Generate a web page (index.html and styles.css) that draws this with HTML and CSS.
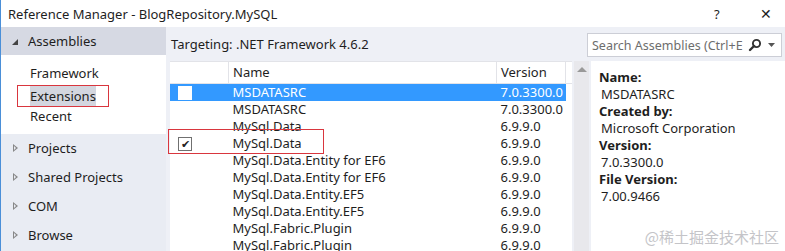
FILE: index.html
```html
<!DOCTYPE html>
<html>

<head>
    <title>Reference Manager - BlogRepository.MySQL</title>
    <link rel="stylesheet" href="styles.css">
</head>

<body>
    <div class="window">
        <div class="titlebar">
            <span class="title">Reference Manager - BlogRepository.MySQL</span>
            <span class="help">?</span>
            <span class="close">&#x2715;</span>
        </div>

        <div class="main">
            <!-- left tree -->
            <div class="sidebar">
                <div class="node open"><span class="arrow-open"></span>Assemblies</div>
                <div class="children">
                    <div class="child">Framework</div>
                    <div class="child"><span class="mark"><span class="picked">Extensions</span></span></div>
                    <div class="child">Recent</div>
                </div>
                <div class="node"><span class="arrow"></span>Projects</div>
                <div class="node"><span class="arrow"></span>Shared Projects</div>
                <div class="node"><span class="arrow"></span>COM</div>
                <div class="node"><span class="arrow"></span>Browse</div>
            </div>

            <div class="content">
                <div class="target-bar">
                    <span>Targeting: .NET Framework 4.6.2</span>
                    <div class="search">
                        <span class="placeholder">Search Assemblies (Ctrl+E</span>
                        <svg class="glass" width="14" height="14" viewBox="0 0 14 14">
                            <circle cx="8.5" cy="5.5" r="3.6" fill="none" stroke="#333" stroke-width="1.9" />
                            <line x1="6" y1="8" x2="2" y2="12" stroke="#333" stroke-width="2.4" stroke-linecap="round" />
                        </svg>
                        <svg class="drop" width="7" height="4" viewBox="0 0 7 4">
                            <polygon points="0,0 7,0 3.5,4" fill="#555" />
                        </svg>
                    </div>
                </div>

                <div class="body">
                    <div class="list">
                        <table class="grid">
                            <thead>
                                <tr>
                                    <th class="c-check"></th>
                                    <th class="c-name">Name</th>
                                    <th class="c-ver">Version</th>
                                    <th class="c-rest"></th>
                                </tr>
                            </thead>
                            <tbody id="rows"></tbody>
                        </table>
                        <div class="annot"></div>
                    </div>
                    <div class="scroll"><span class="up"></span></div>
                    <div class="details">
                        <div class="lbl">Name:</div>
                        <div class="val">MSDATASRC</div>
                        <div class="lbl">Created by:</div>
                        <div class="val">Microsoft Corporation</div>
                        <div class="lbl">Version:</div>
                        <div class="val">7.0.3300.0</div>
                        <div class="lbl">File Version:</div>
                        <div class="val">7.00.9466</div>
                    </div>
                </div>
            </div>
        </div>
        <div class="watermark">@稀土掘金技术社区</div>
    </div>

    <script>
        let assemblies = [
            ["MSDATASRC", "7.0.3300.0", "box", true],
            ["MSDATASRC", "7.0.3300.0", "", false],
            ["MySql.Data", "6.9.9.0", "", false],
            ["MySql.Data", "6.9.9.0", "checked", false],
            ["MySql.Data.Entity for EF6", "6.9.9.0", "", false],
            ["MySql.Data.Entity for EF6", "6.9.9.0", "", false],
            ["MySql.Data.Entity.EF5", "6.9.9.0", "", false],
            ["MySql.Data.Entity.EF5", "6.9.9.0", "", false],
            ["MySql.Fabric.Plugin", "6.9.9.0", "", false],
            ["MySql.Fabric.Plugin", "6.9.9.0", "", false]
        ];
        let html = '';
        for (let i = 0; i < assemblies.length; i++) {
            let a = assemblies[i];
            let check = '';
            if (a[2] == 'box') {
                check = '<span class="cb"></span>';
            } else if (a[2] == 'checked') {
                check = '<span class="cb on">&#x2714;</span>';
            }
            html += '<tr' + (a[3] ? ' class="sel"' : '') + '>';
            html += '<td class="c-check">' + check + '</td>';
            html += '<td class="c-name">' + a[0] + '</td>';
            html += '<td class="c-ver">' + a[1] + '</td>';
            html += '<td class="c-rest"></td>';
            html += '</tr>';
        }
        document.getElementById("rows").innerHTML = html;
    </script>
</body>

</html>
```

FILE: styles.css
```css
/* Page and window */
body {
    margin: 0;
    font-family: "Noto Sans", "Noto Sans CJK SC", sans-serif;
    font-size: 13px;
    color: #1e1e1e;
}

.window {
    position: relative;
    width: 785px;
    height: 251px;
    overflow: hidden;
    background: #fff;
    border-left: 1px solid #4a8fd8;
    box-sizing: border-box;
}

/* Title bar */
.titlebar {
    height: 27px;
    display: flex;
    align-items: center;
    padding-left: 7px;
    font-size: 13px;
}

.title {
    flex: 1;
}

.help {
    width: 46px;
    font-size: 13px;
}

.close {
    width: 25px;
    font-size: 14px;
}

.main {
    display: flex;
    height: 224px;
}

/* Left tree */
.sidebar {
    width: 165px;
    flex-shrink: 0;
    background: #e9ecf3;
}

.node {
    height: 29px;
    display: flex;
    align-items: center;
    padding-left: 11px;
}

.node.open {
    height: 28px;
    background: #d6d9e3;
}

.arrow-open {
    width: 0;
    height: 0;
    border-left: 6px solid transparent;
    border-bottom: 6px solid #444;
    margin-right: 10px;
    margin-top: 2px;
}

.arrow {
    width: 0;
    height: 0;
    border-top: 4px solid transparent;
    border-bottom: 4px solid transparent;
    border-left: 5px solid #888;
    margin-left: 1px;
    margin-right: 10px;
    position: relative;
}

.arrow::after {
    content: "";
    position: absolute;
    left: -4px;
    top: -2px;
    border-top: 2px solid transparent;
    border-bottom: 2px solid transparent;
    border-left: 2px solid #e9ecf3;
}

.children {
    background: #fff;
    padding: 8px 0 6px 0;
}

.child {
    height: 21.5px;
    line-height: 21.5px;
    padding-left: 29px;
}

.mark {
    display: inline-block;
    margin-left: -13px;
    padding-left: 12px;
    width: 78px;
    border: 1px solid #d9363e;
    line-height: 20px;
}

.picked {
    background: #d3d6df;
    padding: 1px 0;
}

/* Right side */
.content {
    flex: 1;
    min-width: 0;
    display: flex;
    flex-direction: column;
    background: #eef0f6;
}

.target-bar {
    height: 34px;
    flex-shrink: 0;
    display: flex;
    align-items: center;
    justify-content: space-between;
    padding-left: 5px;
    padding-right: 3px;
}

.search {
    width: 189px;
    height: 22px;
    background: #fff;
    border: 1px solid #ccced6;
    display: flex;
    align-items: center;
    padding-left: 4px;
    color: #6d6d6d;
    font-size: 12.5px;
    margin-top: 2px;
}

.placeholder {
    flex: 1;
    white-space: nowrap;
    overflow: hidden;
}

.glass {
    margin: 0 6px 0 4px;
}

.drop {
    margin-right: 6px;
}

.body {
    flex: 1;
    min-height: 0;
    overflow: hidden;
    display: flex;
    padding-left: 4px;
}

.list {
    position: relative;
    width: 402px;
    background: #fff;
}

/* Grid */
.grid {
    border-collapse: collapse;
    width: 100%;
    table-layout: fixed;
}

.grid th {
    height: 21px;
    line-height: 21px;
    font-weight: normal;
    text-align: left;
    padding: 0 0 0 4px;
    border: 1px solid #e2e3e8;
    border-left: none;
    background: #fff;
}

.grid th.c-rest {
    border-right: none;
}

.grid td {
    height: 17px;
    line-height: 17px;
    padding: 0 0 0 4px;
    white-space: nowrap;
}

.c-check {
    width: 54px;
}

.c-name {
    width: 263px;
}

.c-ver {
    width: 64px;
}

tr.sel td {
    background: #3399ff;
    color: #fff;
}

tr.sel td.c-rest {
    background: #fff;
}

.cb {
    display: inline-block;
    width: 12px;
    height: 12px;
    margin-left: 4px;
    margin-top: 2px;
    background: #fff;
    border: 1px solid #707070;
    vertical-align: top;
    color: #222;
    font-size: 11px;
    line-height: 12px;
    text-align: center;
}

tr.sel .cb {
    border-color: #fff;
}

/* Red annotation around the checked row */
.annot {
    position: absolute;
    left: -2px;
    top: 68px;
    width: 154px;
    height: 23px;
    border: 1px solid #d9363e;
}

.scroll {
    width: 15px;
    margin-left: 2px;
    background: #e8e8ec;
    display: flex;
    justify-content: center;
}

.up {
    margin-top: 6px;
    width: 0;
    height: 0;
    border-left: 5px solid transparent;
    border-right: 5px solid transparent;
    border-bottom: 5px solid #999;
}

/* Details panel */
.details {
    flex: 1;
    margin-left: 2px;
    background: #fff;
    padding: 8px 0 0 8px;
}

.lbl,
.val {
    height: 17px;
    line-height: 17px;
}

.lbl {
    font-weight: bold;
}

.val {
    padding-left: 2px;
}

.watermark {
    position: absolute;
    right: 6px;
    bottom: 4px;
    font-family: "Noto Sans CJK SC", sans-serif;
    font-size: 15px;
    color: #c4c4c8;
}
```
